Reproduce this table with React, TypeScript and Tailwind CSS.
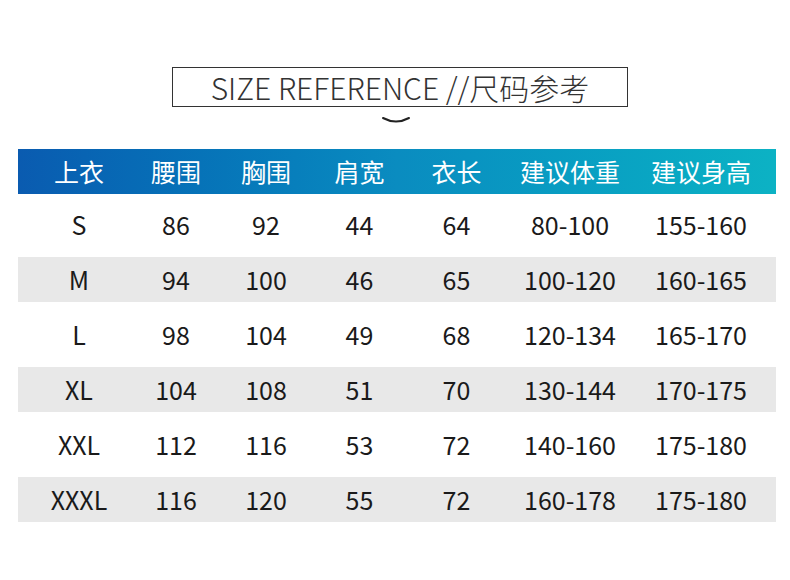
import React from 'react';

const columns = ['上衣', '腰围', '胸围', '肩宽', '衣长', '建议体重', '建议身高'];

const rows: string[][] = [
  ['S', '86', '92', '44', '64', '80-100', '155-160'],
  ['M', '94', '100', '46', '65', '100-120', '160-165'],
  ['L', '98', '104', '49', '68', '120-134', '165-170'],
  ['XL', '104', '108', '51', '70', '130-144', '170-175'],
  ['XXL', '112', '116', '53', '72', '140-160', '175-180'],
  ['XXXL', '116', '120', '55', '72', '160-178', '175-180'],
];

const grid = 'grid grid-cols-[122px_72px_108px_79px_115px_112px_150px]';

function App() {
  return (
    <div
      className="w-[790px] h-[580px] bg-white overflow-hidden"
      style={{ fontFamily: '"Noto Sans CJK SC", "Noto Sans", sans-serif' }}
    >
      {/* Title */}
      <div className="pt-[67px] flex flex-col items-center">
        <div className="ml-[10px] w-[456px] h-[40px] border border-[#333] flex items-center justify-center">
          <span className="text-[30px] font-light leading-none text-[#333]">
            SIZE REFERENCE //尺码参考
          </span>
        </div>
        <svg className="mt-[9px] ml-[2px]" width="28" height="9" viewBox="0 0 28 9">
          <path d="M1 2 Q14 9 27 2" fill="none" stroke="#222" strokeWidth="2" strokeLinecap="round" />
        </svg>
      </div>

      {/* Table */}
      <div className="ml-[18px] w-[758px] mt-[24px]">
        <div className={`${grid} h-[45px] items-center bg-gradient-to-r from-[#0a5bb0] via-[#0a8cc0] to-[#0cb2c4] text-white text-[25px]`}>
          {columns.map((c) => (
            <div key={c} className="text-center leading-none">
              {c}
            </div>
          ))}
        </div>
        <div className="flex flex-col gap-[10px] mt-[8px]">
          {rows.map((r, i) => (
            <div
              key={r[0]}
              className={`${grid} h-[45px] items-center text-[25px] text-[#1a1a1a] ${i % 2 === 1 ? 'bg-[#e8e8e8]' : 'bg-white'}`}
            >
              {r.map((v, j) => (
                <div key={j} className="text-center leading-none">
                  {v}
                </div>
              ))}
            </div>
          ))}
        </div>
      </div>
    </div>
  );
}

export default App;
